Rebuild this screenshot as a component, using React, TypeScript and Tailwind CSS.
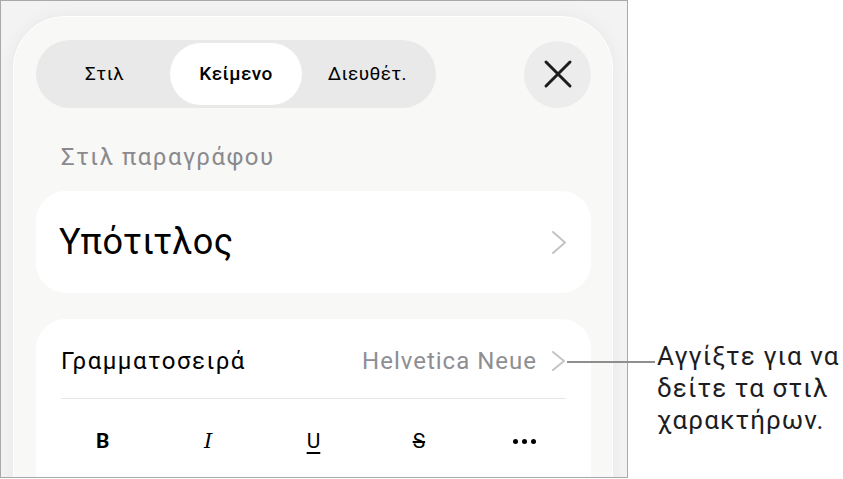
const tabs = ["Στιλ", "Κείμενο", "Διευθέτ."];

function CloseIcon() {
  return (
    <svg width="30" height="30" viewBox="0 0 30 30" fill="none">
      <path d="M3 3 L27 27 M27 3 L3 27" stroke="#1c1c1e" strokeWidth="3" strokeLinecap="round" />
    </svg>
  );
}

function Chevron({ w, h }: { w: number; h: number }) {
  return (
    <svg width={w + 4} height={h + 4} viewBox={`0 0 ${w + 4} ${h + 4}`} fill="none">
      <path
        d={`M2 2 L${w + 2} ${h / 2 + 2} L2 ${h + 2}`}
        stroke="#c4c4c6"
        strokeWidth="2"
        strokeLinecap="round"
        strokeLinejoin="round"
      />
    </svg>
  );
}

export default function App() {
  return (
    <div
      className="relative flex h-[479px] w-[843px] bg-white text-black"
      style={{ fontFamily: "Roboto, 'Noto Sans', sans-serif" }}
    >
      {/* device frame */}
      <div className="h-[478px] w-[628px] shrink-0 overflow-hidden border border-[#a9a9a9] bg-[#f3f3f3]">
        <div className="ml-[12px] mt-[15px] h-[500px] w-[600px] rounded-t-[52px] border border-white bg-[#f8f8f7] pl-[22px] pr-[21px] pt-[23px] shadow-[0_0_18px_rgba(0,0,0,0.05)]">
          {/* header: tabs + close */}
          <div className="flex h-[68px] items-center justify-between">
            <div className="flex h-[68px] w-[400px] rounded-full bg-[#e9e9e9] p-[3px]">
              {tabs.map((t) => (
                <div
                  key={t}
                  className={`flex flex-1 items-center justify-center rounded-full text-[19px] tracking-[0.4px] ${
                    t === "Κείμενο" ? "bg-white font-medium" : "font-normal"
                  }`}
                >
                  {t}
                </div>
              ))}
            </div>
            <button
              type="button"
              className="flex h-[67px] w-[67px] items-center justify-center rounded-full bg-[#ececec]"
            >
              <CloseIcon />
            </button>
          </div>

          <p className="mt-[35px] pl-[25px] text-[24px] leading-[28px] tracking-[1.5px] text-[#8a8a8e]">
            Στιλ παραγράφου
          </p>

          <div className="mt-[20px] flex h-[102px] items-center justify-between rounded-[30px] bg-white pl-[23px] pr-[24px]">
            <span className="text-[36px] leading-none tracking-[0.4px]">Υπότιτλος</span>
            <Chevron w={12} h={21} />
          </div>

          <div className="mt-[26px] h-[200px] rounded-t-[30px] bg-white px-[25px]">
            <div className="flex h-[80px] items-center justify-between border-b border-[#e6e6e6] pt-[5px]">
              <span className="text-[24px] tracking-[1.5px]">Γραμματοσειρά</span>
              <span className="flex items-center gap-[14px] text-[24px] tracking-[1px] text-[#8e8e93]">
                Helvetica Neue
                <Chevron w={11} h={18} />
              </span>
            </div>
            <div className="-mx-[11px] grid grid-cols-5 items-center pt-[30px] text-[21px] leading-[24px]">
              <span className="text-center font-bold">B</span>
              <span
                className="text-center italic"
                style={{ fontFamily: "'DejaVu Serif', serif" }}
              >
                I
              </span>
              <span className="text-center underline underline-offset-[4px]">U</span>
              <span className="text-center line-through">S</span>
              <span className="flex justify-center gap-[4px]">
                <span className="h-[5px] w-[5px] rounded-full bg-black" />
                <span className="h-[5px] w-[5px] rounded-full bg-black" />
                <span className="h-[5px] w-[5px] rounded-full bg-black" />
              </span>
            </div>
          </div>
        </div>
      </div>

      {/* callout */}
      <div className="absolute left-[567px] top-[361px] h-[1.5px] w-[88px] bg-[#8e8e8e]" />
      <p className="whitespace-nowrap pl-[29px] pt-[340px] text-[26px] leading-[32px] tracking-[1.1px] text-[#1d1d1f]">
        Αγγίξτε για να
        <br />
        δείτε τα στιλ
        <br />
        χαρακτήρων.
      </p>
    </div>
  );
}
